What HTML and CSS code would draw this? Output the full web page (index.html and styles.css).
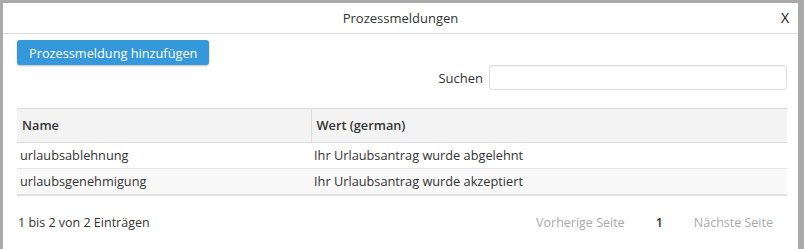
FILE: index.html
```html
<!DOCTYPE html>
<html lang="de">

<head>
  <meta charset="UTF-8">
  <meta name="viewport" content="width=device-width, initial-scale=1.0">
  <title>Prozessmeldungen</title>
  <link rel="stylesheet" href="styles.css">
</head>

<body>
  <div class="modal">
    <div class="modal-head">
      <span class="modal-title">Prozessmeldungen</span>
      <span class="modal-close">X</span>
    </div>

    <div class="modal-body">
      <button class="btn-add">Prozessmeldung hinzufügen</button>

      <div class="search">
        <label for="q">Suchen</label>
        <input id="q" type="text">
      </div>

      <table class="grid">
        <thead>
          <tr>
            <th class="col-name">Name</th>
            <th>Wert (german)</th>
          </tr>
        </thead>
        <tbody>
          <tr>
            <td>urlaubsablehnung</td>
            <td>Ihr Urlaubsantrag wurde abgelehnt</td>
          </tr>
          <tr>
            <td>urlaubsgenehmigung</td>
            <td>Ihr Urlaubsantrag wurde akzeptiert</td>
          </tr>
        </tbody>
      </table>

      <div class="grid-foot">
        <span class="info">1 bis 2 von 2 Einträgen</span>
        <div class="pager">
          <span class="off">Vorherige Seite</span>
          <span class="cur">1</span>
          <span class="off">Nächste Seite</span>
        </div>
      </div>
    </div>
  </div>
</body>

</html>
```

FILE: styles.css
```css
* {
  margin: 0;
  padding: 0;
  box-sizing: border-box;
}

html,
body {
  height: 100%;
}

body {
  background: #a9a9a9;
  padding: 3px 6px 0 3px;
  font-family: "Open Sans", "Liberation Sans", sans-serif;
  font-size: 13px;
  color: #333;
  overflow: hidden;
}

.modal {
  background: #fff;
  height: 100%;
}

.modal-head {
  position: relative;
  height: 31px;
  border-bottom: 1px solid #ddd;
  display: flex;
  align-items: center;
  justify-content: center;
}

.modal-title {
  font-size: 13px;
  color: #333;
}

.modal-close {
  position: absolute;
  right: 9px;
  top: 5px;
  font-size: 14px;
  color: #111;
}

.modal-body {
  padding: 6px 11px 0 14px;
}

.btn-add {
  display: block;
  height: 25px;
  padding: 0 12px;
  border: 0;
  border-radius: 3px;
  background: #3498db;
  color: #fff;
  font-family: inherit;
  font-size: 12.75px;
  box-shadow: 0 1px 2px rgba(0, 0, 0, 0.25);
}

.search {
  display: flex;
  justify-content: flex-end;
  align-items: center;
  gap: 6px;
}

.search label {
  font-size: 13px;
  color: #333;
}

.search input {
  width: 298px;
  height: 25px;
  border: 1px solid #ddd;
  border-radius: 3px;
  box-shadow: inset 0 1px 1px rgba(0, 0, 0, 0.05);
}

.grid {
  width: 100%;
  margin-top: 18px;
  border-collapse: collapse;
  border-bottom: 2px solid #e0e0e0;
  font-size: 12.75px;
}

.grid th {
  background: #f3f3f3;
  height: 34px;
  padding: 0 5px 2px;
  text-align: left;
  font-weight: 600;
  border-top: 1px solid #ddd;
  border-bottom: 1px solid #ddd;
}

.grid th.col-name {
  width: 294px;
  border-right: 1px solid #ddd;
}

.grid td {
  height: 26px;
  padding: 0 3px 1px;
  border-bottom: 1px solid #e6e6e6;
}

.grid tbody tr:nth-child(even) td {
  background: #f9f9f9;
}

.grid-foot {
  display: flex;
  justify-content: space-between;
  align-items: center;
  height: 54px;
  padding: 0 14px 0 1px;
  font-size: 12.5px;
}

.pager {
  display: flex;
  gap: 31px;
}

.pager .off {
  color: #aaa;
}

.pager .cur {
  color: #333;
  font-weight: 600;
}
```
